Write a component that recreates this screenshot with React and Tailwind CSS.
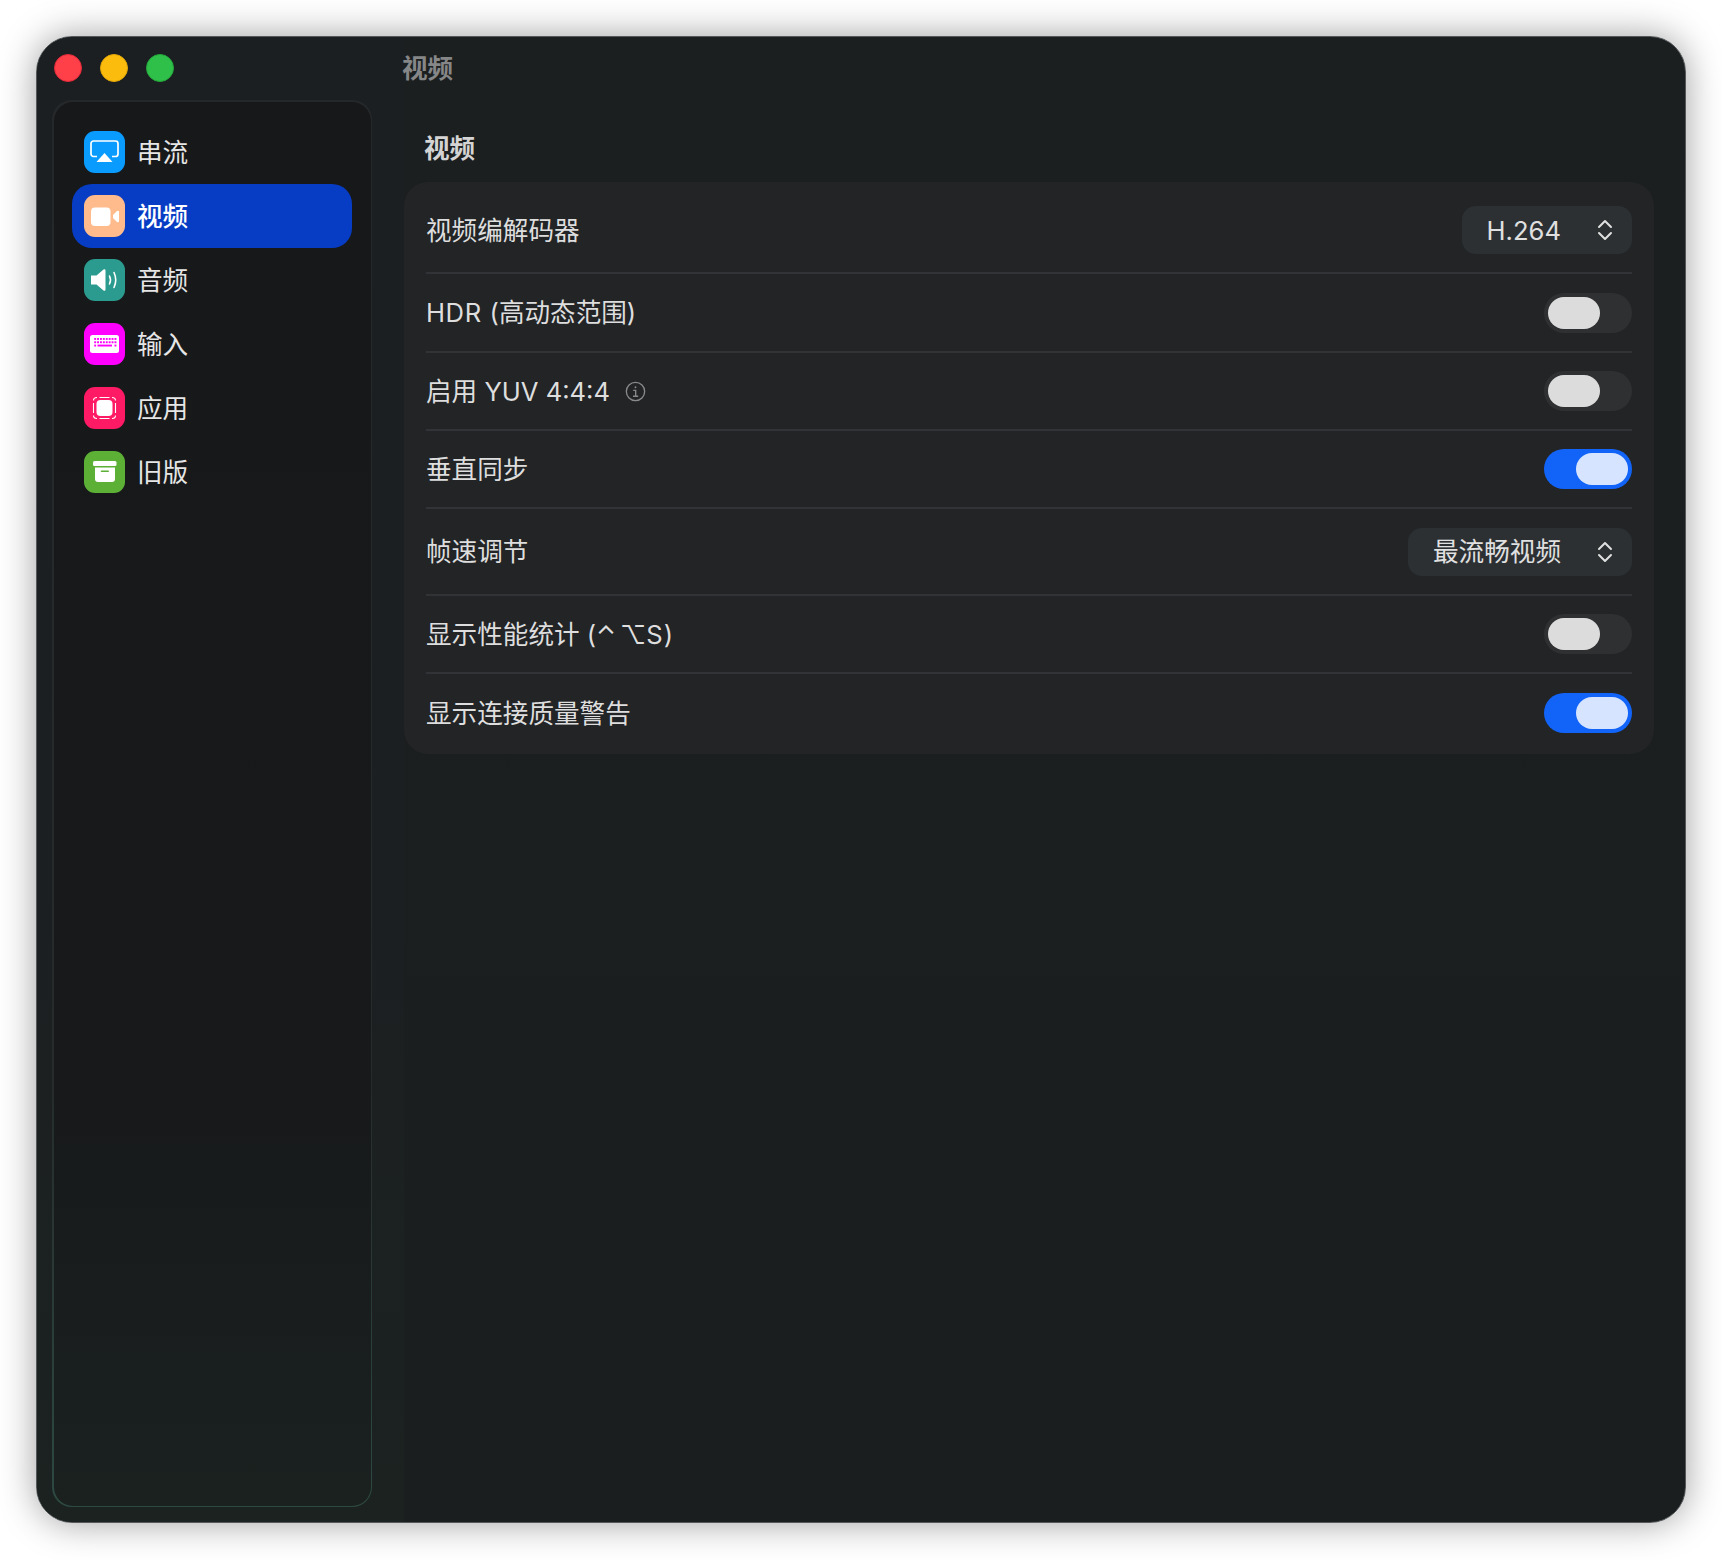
const font = '[font-family:Inter,"Noto_Sans_CJK_SC","DejaVu_Sans",sans-serif]'

function AirplayIcon() {
  return (
    <svg viewBox="0 0 41 42" className="w-full h-full">
      <path d="M13 25.5H9.5a2.5 2.5 0 0 1-2.5-2.5V12.5a2.5 2.5 0 0 1 2.5-2.5h22a2.5 2.5 0 0 1 2.5 2.5V23a2.5 2.5 0 0 1-2.5 2.5H28" fill="none" stroke="white" strokeWidth="1.7" />
      <path d="M20.5 22 L28.5 31 H12.5 Z" fill="white" />
    </svg>
  )
}

function VideoIcon() {
  return (
    <svg viewBox="0 0 41 42" className="w-full h-full">
      <rect x="7" y="12.5" width="19.5" height="18.5" rx="4" fill="white" />
      <path d="M29 20 L33 16 Q35 15 35 17 V26 Q35 28 33 27 L29 23 Z" fill="white" />
    </svg>
  )
}

function AudioIcon() {
  return (
    <svg viewBox="0 0 41 42" className="w-full h-full">
      <path d="M7 16.5 H12.5 L19.5 10.5 Q21.5 9.5 21.5 11.5 V30.5 Q21.5 32.5 19.5 31.5 L12.5 25.5 H7 Z" fill="white" />
      <path d="M25.5 17 Q27.5 21 25.5 25" fill="none" stroke="white" strokeWidth="1.6" strokeLinecap="round" />
      <path d="M30 13.5 Q33.5 21 30 28.5" fill="none" stroke="white" strokeWidth="1.6" strokeLinecap="round" />
    </svg>
  )
}

function KeyboardIcon() {
  const keys = []
  for (let r = 0; r < 3; r++) {
    for (let c = 0; c < 8; c++) {
      if (r === 2 && c > 0 && c < 7) continue
      keys.push(<rect key={r + '-' + c} x={10.2 + c * 2.9} y={15 + r * 3.3} width="1.9" height="1.9" fill="#ff00ff" />)
    }
  }
  return (
    <svg viewBox="0 0 41 42" className="w-full h-full">
      <rect x="6" y="12" width="29" height="18" rx="2.5" fill="white" />
      {keys}
      <rect x="13.5" y="21.6" width="14.5" height="1.9" fill="#ff00ff" />
    </svg>
  )
}

function AppIcon() {
  return (
    <svg viewBox="0 0 41 42" className="w-full h-full">
      <rect x="12.5" y="13" width="16" height="16" rx="4" fill="white" />
      <path d="M15.5 10.5 H25.5 M15.5 31.5 H25.5 M9.5 16 V26 M31.5 16 V26 M9.5 13.5 Q9.5 10.5 13 10.5 M28 10.5 Q31.5 10.5 31.5 13.5 M31.5 28.5 Q31.5 31.5 28 31.5 M13 31.5 Q9.5 31.5 9.5 28.5" fill="none" stroke="white" strokeWidth="1.1" />
    </svg>
  )
}

function ArchiveIcon() {
  return (
    <svg viewBox="0 0 41 42" className="w-full h-full">
      <rect x="9" y="10" width="23.5" height="5" rx="1.5" fill="white" />
      <path d="M11 16.5 H31 V28 Q31 31 28 31 H14 Q11 31 11 28 Z" fill="white" />
      <rect x="16.7" y="19.5" width="8.3" height="1.6" rx="0.8" fill="#5bb035" />
    </svg>
  )
}

const navItems = [
  { label: '串流', color: 'bg-[#0a9bff]', Icon: AirplayIcon },
  { label: '视频', color: 'bg-[#ffbb8c]', Icon: VideoIcon, active: true },
  { label: '音频', color: 'bg-[#2a9b8e]', Icon: AudioIcon },
  { label: '输入', color: 'bg-[#ff00ff]', Icon: KeyboardIcon },
  { label: '应用', color: 'bg-[#ff1a66]', Icon: AppIcon },
  { label: '旧版', color: 'bg-[#5bb035]', Icon: ArchiveIcon },
]

function NavItem({ item }) {
  const { Icon } = item
  return (
    <div className={'flex items-center gap-3 h-16 pl-3 rounded-[20px] ' + (item.active ? 'bg-[#073dc4] text-white font-medium' : 'text-[#e6e6e6]')}>
      <div className={'w-[41px] h-[42px] rounded-[11px] shrink-0 ' + item.color}>
        <Icon />
      </div>
      <span className="text-[25.6px] leading-none pt-[2px]">{item.label}</span>
    </div>
  )
}

function Toggle({ on }) {
  return (
    <div className={'w-[88px] h-10 rounded-full p-1 flex shrink-0 ' + (on ? 'bg-[#1264f8] justify-end' : 'bg-[#2f3032] justify-start')}>
      <div className={'w-[52px] h-8 rounded-full ' + (on ? 'bg-[#d6e4ff]' : 'bg-[#dcdcdc]')} />
    </div>
  )
}

function Select({ value }) {
  return (
    <div className="h-12 rounded-[14px] bg-[#2c3033] flex items-center pl-[25px] pr-[19px] text-[#e0e0e0] text-[25.6px] shrink-0">
      <span className="pt-[2px]">{value}</span>
      <svg viewBox="0 0 16 24" className="w-4 h-6 ml-[36px]" fill="none" stroke="#e0e0e0" strokeWidth="2" strokeLinecap="round" strokeLinejoin="round">
        <path d="M2 9 L8 3 L14 9" />
        <path d="M2 15 L8 21 L14 15" />
      </svg>
    </div>
  )
}

function InfoIcon() {
  return (
    <svg viewBox="0 0 22 22" className="w-[21px] h-[21px] ml-[15px]" fill="none" stroke="#8a8a8a" strokeWidth="1.4">
      <circle cx="11" cy="11" r="9.6" />
      <path d="M8.6 9.8 H11.2 V16 M8.4 16 H13.8" />
      <circle cx="11" cy="6.6" r="1" fill="#8a8a8a" stroke="none" />
    </svg>
  )
}

function Row({ label, children, last, height = 'h-[78px]', extra }) {
  return (
    <div className={'flex items-center justify-between text-[#dedede] text-[25.6px] ' + height + (last ? '' : ' border-b-2 border-[#323336]')}>
      <div className="flex items-center pt-[2px]">
        <span>{label}</span>
        {extra}
      </div>
      {children}
    </div>
  )
}

export default function App() {
  return (
    <div className={'w-[1722px] h-[1560px] bg-white p-9 ' + font}>
      <div className="w-[1650px] h-[1487px] rounded-[36px] border-[1.5px] border-[#54585a] bg-linear-to-b from-[#1c1f20] to-[#1b1e1f] shadow-[0_0_36px_rgba(0,0,0,0.38)] flex overflow-hidden">
        <div className="w-[367px] shrink-0 flex flex-col pl-[15px] pb-[15px] bg-linear-to-b from-[#1c1f21] via-[#1c1f21] via-60% to-[#1b2220]">
          <div className="h-[63px] flex items-center gap-[18px] pl-[2px] pb-[2px] shrink-0">
            <div className="w-7 h-7 rounded-full bg-[#ff4049] border border-[#e0283a]" />
            <div className="w-7 h-7 rounded-full bg-[#fcbc0d] border border-[#e0a608]" />
            <div className="w-7 h-7 rounded-full bg-[#2fc04a] border border-[#25a53c]" />
          </div>
          <div className="flex-1 w-[320px] rounded-[20px] p-[1.5px] bg-linear-to-b from-[#25282a] via-[#262b2c] via-70% to-[#2d4a42]">
            <div className="h-full rounded-[19px] px-[18.5px] pt-[18.5px] bg-linear-to-b from-[#17181a] via-[#17191b] via-70% to-[#1a211f]">
              {navItems.map((item) => (
                <NavItem key={item.label} item={item} />
              ))}
            </div>
          </div>
        </div>
        <div className="flex-1 pr-[31px]">
          <div className="h-[63px] flex items-center pt-[1px]">
            <span className="text-[25.6px] font-semibold text-[#858687] -ml-[2px]">视频</span>
          </div>
          <div className="h-[82px] flex items-center pl-[20px] pt-[16px]">
            <span className="text-[25.6px] font-semibold text-[#d4d4d4]">视频</span>
          </div>
          <div className="rounded-[24px] bg-[#222426] px-[22px] pt-[6px] pb-[2px]">
            <Row label="视频编解码器" height="h-[86px]"><Select value="H.264" /></Row>
            <Row label={<><span className="tracking-[0.6px]">HDR </span>(高动态范围)</>} height="h-[79px]"><Toggle /></Row>
            <Row label="启用 YUV 4:4:4" extra={<InfoIcon />}><Toggle /></Row>
            <Row label="垂直同步"><Toggle on /></Row>
            <Row label="帧速调节" height="h-[87px]"><Select value="最流畅视频" /></Row>
            <Row label={<>显示性能统计 (<span className="tracking-[4px]">⌃</span>⌥<span className="tracking-[1px]">S</span>)</>}><Toggle /></Row>
            <Row label="显示连接质量警告" last><Toggle on /></Row>
          </div>
        </div>
      </div>
    </div>
  )
}
